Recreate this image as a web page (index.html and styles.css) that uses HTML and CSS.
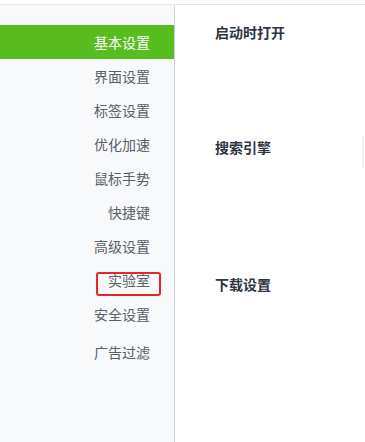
FILE: index.html
```html
<!DOCTYPE html>
<html lang="zh-CN">
<head>
    <meta charset="UTF-8">
    <meta name="viewport" content="width=device-width, initial-scale=1.0">
    <title>设置</title>
    <link rel="stylesheet" href="styles.css">
</head>
<body>
    <div class="page">
        <ul class="sidebar">
            <li class="active">基本设置</li>
            <li>界面设置</li>
            <li>标签设置</li>
            <li>优化加速</li>
            <li>鼠标手势</li>
            <li>快捷键</li>
            <li>高级设置</li>
            <li class="marked">实验室</li>
            <li>安全设置</li>
            <li class="last">广告过滤</li>
        </ul>
        <div class="content">
            <h2 class="startup">启动时打开</h2>
            <h2 class="search">搜索引擎</h2>
            <h2 class="download">下载设置</h2>
        </div>
    </div>
</body>
</html>
```

FILE: styles.css
```css
body {
    margin: 0;
    padding-top: 4px;
    background-color: #fff;
    font-family: "Microsoft YaHei", "Noto Sans CJK SC", sans-serif;
    font-size: 14px;
}
.page {
    display: flex;
    height: 437px;
    border-top: 1px solid #e6e6e6;
}
.sidebar {
    list-style: none;
    margin: 0;
    padding: 20px 0 0;
    width: 174px;
    background-color: #f7f9fb;
    border-right: 1px solid #cfd2d6;
}
.sidebar li {
    height: 34px;
    line-height: 34px;
    padding-right: 24px;
    text-align: right;
    color: #5a5e66;
    position: relative;
}
.sidebar li.active {
    background-color: #58bd1e;
    color: #fff;
}
.sidebar li.last {
    margin-top: 4px;
}
.sidebar li.marked::after {
    content: "";
    position: absolute;
    left: 96px;
    top: 9px;
    width: 61px;
    height: 20px;
    border: 2px solid #e8252b;
    border-radius: 3px;
}
.content {
    flex: 1;
    padding-left: 40px;
    position: relative;
}
.content::after {
    content: "";
    position: absolute;
    right: 1px;
    top: 132px;
    width: 2px;
    height: 30px;
    background-color: #f0f0f0;
}
.content h2 {
    margin: 0;
    font-size: 14px;
    font-weight: bold;
    line-height: 20px;
    color: #2e3440;
}
.startup {
    padding-top: 17px;
}
.search {
    margin-top: 95px !important;
}
.download {
    margin-top: 117px !important;
}
```
